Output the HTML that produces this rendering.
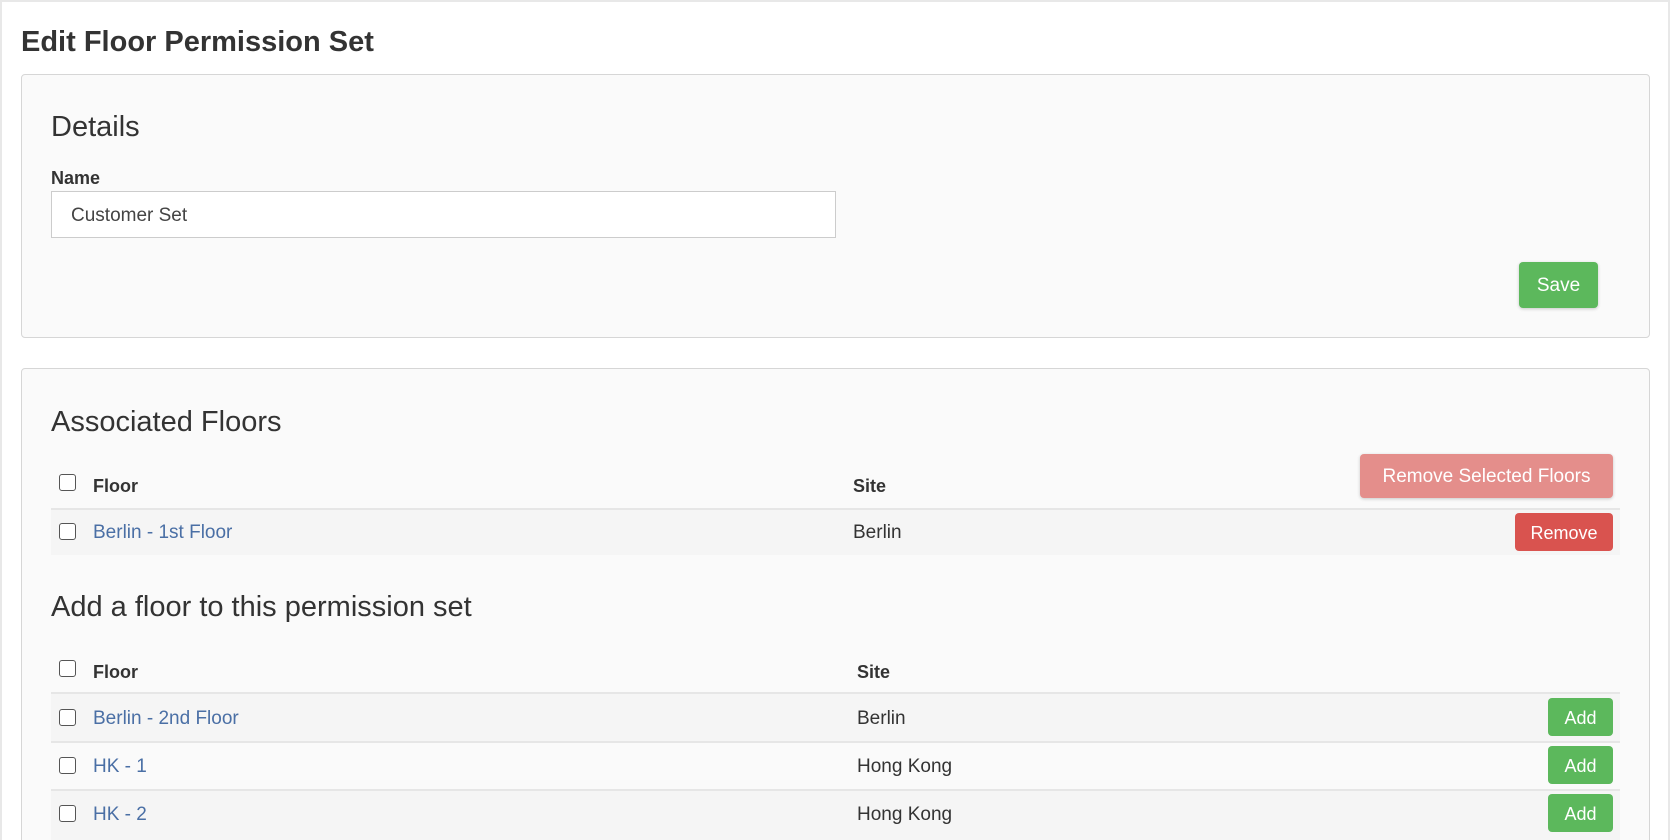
<!DOCTYPE html>
<html><head><meta charset="utf-8"><style>
*{box-sizing:border-box;margin:0;padding:0}
html,body{width:1670px;height:840px;overflow:hidden}
body{background:#fff;font-family:"Liberation Sans",sans-serif;color:#333;position:relative}
.frame{position:absolute;left:0;top:0;width:1670px;height:840px;border:2px solid #e8e8e8;border-bottom:none}
.abs{position:absolute}
h1{position:absolute;left:21px;top:26px;font-size:29px;font-weight:bold;color:#333;letter-spacing:0}
.panel{position:absolute;background:#fafafa;border:1px solid #d6d6d6;border-radius:4px}
.h2{position:absolute;font-size:29px;font-weight:normal;color:#333}
.btn{position:absolute;color:#fff;border-radius:4px;text-align:center;font-size:18px;box-shadow:0 1px 3px rgba(0,0,0,.2)}
.green{background:#5cb85c}
.cb{position:absolute;width:17px;height:17px;border:1.5px solid #555;border-radius:3px;background:#fff}
.th{position:absolute;font-weight:bold;font-size:18px}
.td{position:absolute;font-size:19px}
.link{color:#4a6fa5}
.row{position:absolute;left:51px;width:1569px;background:#f5f5f5}
.line{position:absolute;left:51px;width:1569px;height:2px;background:#e6e6e6}
</style></head><body>
<div class="frame"></div>
<h1>Edit Floor Permission Set</h1>
<div class="panel" style="left:21px;top:74px;width:1629px;height:264px"></div>
<div class="h2" style="left:51px;top:111px">Details</div>
<div class="th" style="left:51px;top:168px">Name</div>
<div class="abs" style="left:51px;top:191px;width:785px;height:47px;background:#fff;border:1px solid #ccc;padding:13px 19px;font-size:19px;color:#444">Customer Set</div>
<div class="btn green" style="left:1519px;top:262px;width:79px;height:46px;line-height:48px;font-size:19px">Save</div>

<div class="panel" style="left:21px;top:368px;width:1629px;height:480px"></div>
<div class="h2" style="left:51px;top:406px">Associated Floors</div>
<div class="btn" style="left:1360px;top:454px;width:253px;height:44px;line-height:46px;background:#e48e8b;font-size:19px">Remove Selected Floors</div>
<div class="cb" style="left:59px;top:474px"></div>
<div class="th" style="left:93px;top:476px">Floor</div>
<div class="th" style="left:853px;top:476px">Site</div>
<div class="line" style="top:508px"></div>
<div class="row" style="top:510px;height:45px"></div>
<div class="cb" style="left:59px;top:523px"></div>
<div class="td link" style="left:93px;top:522px">Berlin - 1st Floor</div>
<div class="td" style="left:853px;top:522px">Berlin</div>
<div class="btn" style="left:1515px;top:513px;width:98px;height:38px;line-height:40px;background:#d9534f;box-shadow:none">Remove</div>

<div class="h2" style="left:51px;top:591px">Add a floor to this permission set</div>
<div class="cb" style="left:59px;top:660px"></div>
<div class="th" style="left:93px;top:662px">Floor</div>
<div class="th" style="left:857px;top:662px">Site</div>
<div class="line" style="top:692px"></div>
<div class="row" style="top:694px;height:47px"></div>
<div class="line" style="top:741px"></div>
<div class="row" style="top:743px;height:46px;background:#fafafa"></div>
<div class="line" style="top:789px"></div>
<div class="row" style="top:791px;height:49px"></div>
<div class="cb" style="left:59px;top:709px"></div>
<div class="td link" style="left:93px;top:708px">Berlin - 2nd Floor</div>
<div class="td" style="left:857px;top:708px">Berlin</div>
<div class="btn green" style="left:1548px;top:698px;width:65px;height:38px;line-height:40px;box-shadow:none">Add</div>
<div class="cb" style="left:59px;top:757px"></div>
<div class="td link" style="left:93px;top:756px">HK - 1</div>
<div class="td" style="left:857px;top:756px">Hong Kong</div>
<div class="btn green" style="left:1548px;top:746px;width:65px;height:38px;line-height:40px;box-shadow:none">Add</div>
<div class="cb" style="left:59px;top:805px"></div>
<div class="td link" style="left:93px;top:804px">HK - 2</div>
<div class="td" style="left:857px;top:804px">Hong Kong</div>
<div class="btn green" style="left:1548px;top:794px;width:65px;height:38px;line-height:40px;box-shadow:none">Add</div>
</body></html>
